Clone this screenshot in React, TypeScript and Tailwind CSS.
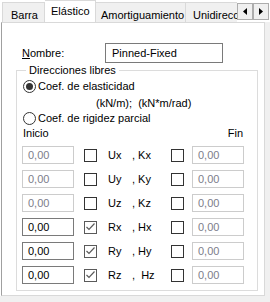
import React from 'react'

const font = { fontFamily: '"Liberation Sans", Arial, sans-serif' }

const Tab = ({ label, active, className = '' }: { label: string; active?: boolean; className?: string }) => (
  <div
    className={`shrink-0 border border-b-0 border-[#d9d9d9] whitespace-nowrap ${
      active ? 'h-[23px] bg-white relative z-10 mb-[-1px] pt-[4px]' : 'h-[20px] bg-[#f0f0f0] pt-[6px]'
    } ${className}`}
  >
    <span className="leading-[13px] block">{label}</span>
  </div>
)

const ArrowBtn = ({ dir }: { dir: 'left' | 'right' }) => (
  <div className="w-[16px] h-[17px] bg-[#f0f0f0] border border-[#adadad] flex items-center justify-center">
    <svg width="4" height="7" viewBox="0 0 4 7">
      {dir === 'left' ? <path d="M4 0v7L0 3.5z" fill="#000" /> : <path d="M0 0v7l4-3.5z" fill="#000" />}
    </svg>
  </div>
)

const Check = ({ checked }: { checked?: boolean }) => (
  <div
    className={`w-[13px] h-[13px] border bg-white flex items-center justify-center ${
      checked ? 'border-[#5a5a5a]' : 'border-[#333333]'
    }`}
  >
    {checked && (
      <svg width="9" height="8" viewBox="0 0 9 8">
        <path d="M0.5 4l2.5 2.5 5.5-6" fill="none" stroke="#5a5a5a" strokeWidth="1.2" />
      </svg>
    )}
  </div>
)

const Field = ({ enabled }: { enabled?: boolean }) => (
  <div
    className={`w-[52px] h-[18px] bg-white border pl-[5px] flex items-center leading-none ${
      enabled ? 'border-[#7a7a7a] text-black' : 'border-[#cccccc] text-[#7d7d8a]'
    }`}
  >
    0,00
  </div>
)

const Radio = ({ on, label }: { on?: boolean; label: string }) => (
  <div className="flex items-center h-[16px]">
    <div className="w-[13px] h-[13px] rounded-full border border-[#333333] bg-white flex items-center justify-center">
      {on && <div className="w-[7px] h-[7px] rounded-full bg-[#333333]" />}
    </div>
    <span className="ml-[2px]">{label}</span>
  </div>
)

const rows = [
  { a: 'Ux', b: ', Kx', start: false, chk: false },
  { a: 'Uy', b: ', Ky', start: false, chk: false },
  { a: 'Uz', b: ', Kz', start: false, chk: false },
  { a: 'Rx', b: ', Hx', start: true, chk: true },
  { a: 'Ry', b: ', Hy', start: true, chk: true },
  { a: 'Rz', b: ',  Hz', start: true, chk: true },
]

export default function App() {
  return (
    <div className="w-[270px] h-[302px] bg-white overflow-hidden text-[11px] text-black" style={font}>
      {/* pestañas */}
      <div className="flex items-end h-[22px]">
        <div className="flex items-end flex-1 overflow-hidden pl-[2px]">
          <Tab label="Barra" className="w-[43px] pl-[8px]" />
          <Tab label="Elástico" active className="w-[51px] pl-[6px] border-l-0" />
          <Tab label="Amortiguamiento" className="w-[90px] pl-[5px] border-l-0" />
          <Tab label="Unidireccional" className="w-[60px] pl-[7px] border-l-0" />
        </div>
        <div className="flex self-start mt-[3px] mr-[1px]">
          <ArrowBtn dir="left" />
          <ArrowBtn dir="right" />
        </div>
      </div>

      <div className="flex h-[274px]">
        <div className="w-[264px] ml-[1px] bg-white border border-[#d9d9d9] border-l-[#a0a0a0] pl-[20px] pt-[20px]">
          {/* nombre */}
          <div className="flex items-center h-[20px]">
            <span className="w-[83px]">
              <span className="underline">N</span>ombre:
            </span>
            <div className="w-[118px] h-[20px] border border-[#7a7a7a] pl-[6px] flex items-center">Pinned-Fixed</div>
          </div>

          {/* direcciones libres */}
          <fieldset className="ml-[-6px] w-[242px] h-[228px] border border-[#dcdcdc] pl-[6px] pr-[12px] pb-0 m-0">
            <legend className="ml-[3px] px-[3px] leading-[14px]">Direcciones libres</legend>
            <div className="mt-[1px]">
              <Radio on label="Coef. de elasticidad" />
            </div>
            <div className="h-[16px] leading-[16px] pl-[73px] mt-[1px] whitespace-pre">(kN/m);  (kN*m/rad)</div>
            <div className="mt-[-1px]">
              <Radio label="Coef. de rigidez parcial" />
            </div>
            <div className="flex justify-between h-[16px] leading-[16px] pr-[2px] mt-[-1px]">
              <span>Inicio</span>
              <span>Fin</span>
            </div>
            <div className="flex flex-col gap-[6px] mt-[5px] ml-[-1px]">
              {rows.map((r) => (
                <div key={r.a} className="flex items-center h-[18px]">
                  <Field enabled={r.start} />
                  <div className="ml-[10px]">
                    <Check checked={r.chk} />
                  </div>
                  <span className="ml-[11px] w-[24px]">{r.a}</span>
                  <span className="w-[39px] whitespace-pre">{r.b}</span>
                  <Check />
                  <div className="ml-[8px]">
                    <Field />
                  </div>
                </div>
              ))}
            </div>
          </fieldset>
        </div>
        <div className="flex-1 bg-[#f0f0f0]" />
      </div>
      <div className="h-[6px] bg-[#f0f0f0]" />
    </div>
  )
}
